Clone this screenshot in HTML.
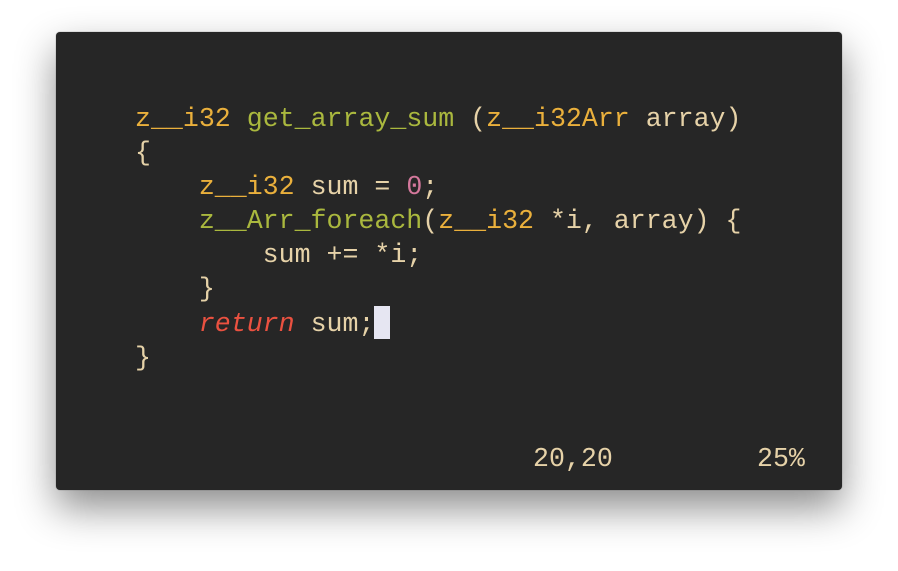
<!DOCTYPE html>
<html><head><style>
html,body{margin:0;padding:0;width:898px;height:571px;background:#fff;overflow:hidden}
.win{position:absolute;left:56px;top:32px;width:786px;height:458px;background:#262626;border-radius:4px;box-shadow:0 18px 40px rgba(0,0,0,.45),0 0 1px rgba(0,0,0,.5)}
pre{position:absolute;left:79px;top:70px;margin:0;font-family:"Liberation Mono",monospace;font-size:26.6px;line-height:34px;color:#e6d2a8}
.o{color:#eab03c}.g{color:#aab83e}.p{color:#d4789c}.r{color:#ea5140;font-style:italic}
.cur{display:inline-block;width:16px;height:33px;background:#e6e6f2;vertical-align:-8px}
.st{position:absolute;top:410px;font-family:"Liberation Mono",monospace;font-size:26.6px;line-height:34px;color:#e6d2a8}
</style></head><body>
<div class="win">
<pre><span class="o">z__i32</span> <span class="g">get_array_sum</span> (<span class="o">z__i32Arr</span> array)
{
    <span class="o">z__i32</span> sum = <span class="p">0</span>;
    <span class="g">z__Arr_foreach</span>(<span class="o">z__i32</span> *i, array) {
        sum += *i;
    }
    <span class="r">return</span> sum;<span class="cur"></span>
}</pre>
<div class="st" style="left:477px">20,20</div>
<div class="st" style="left:701px">25%</div>
</div>
</body></html>
